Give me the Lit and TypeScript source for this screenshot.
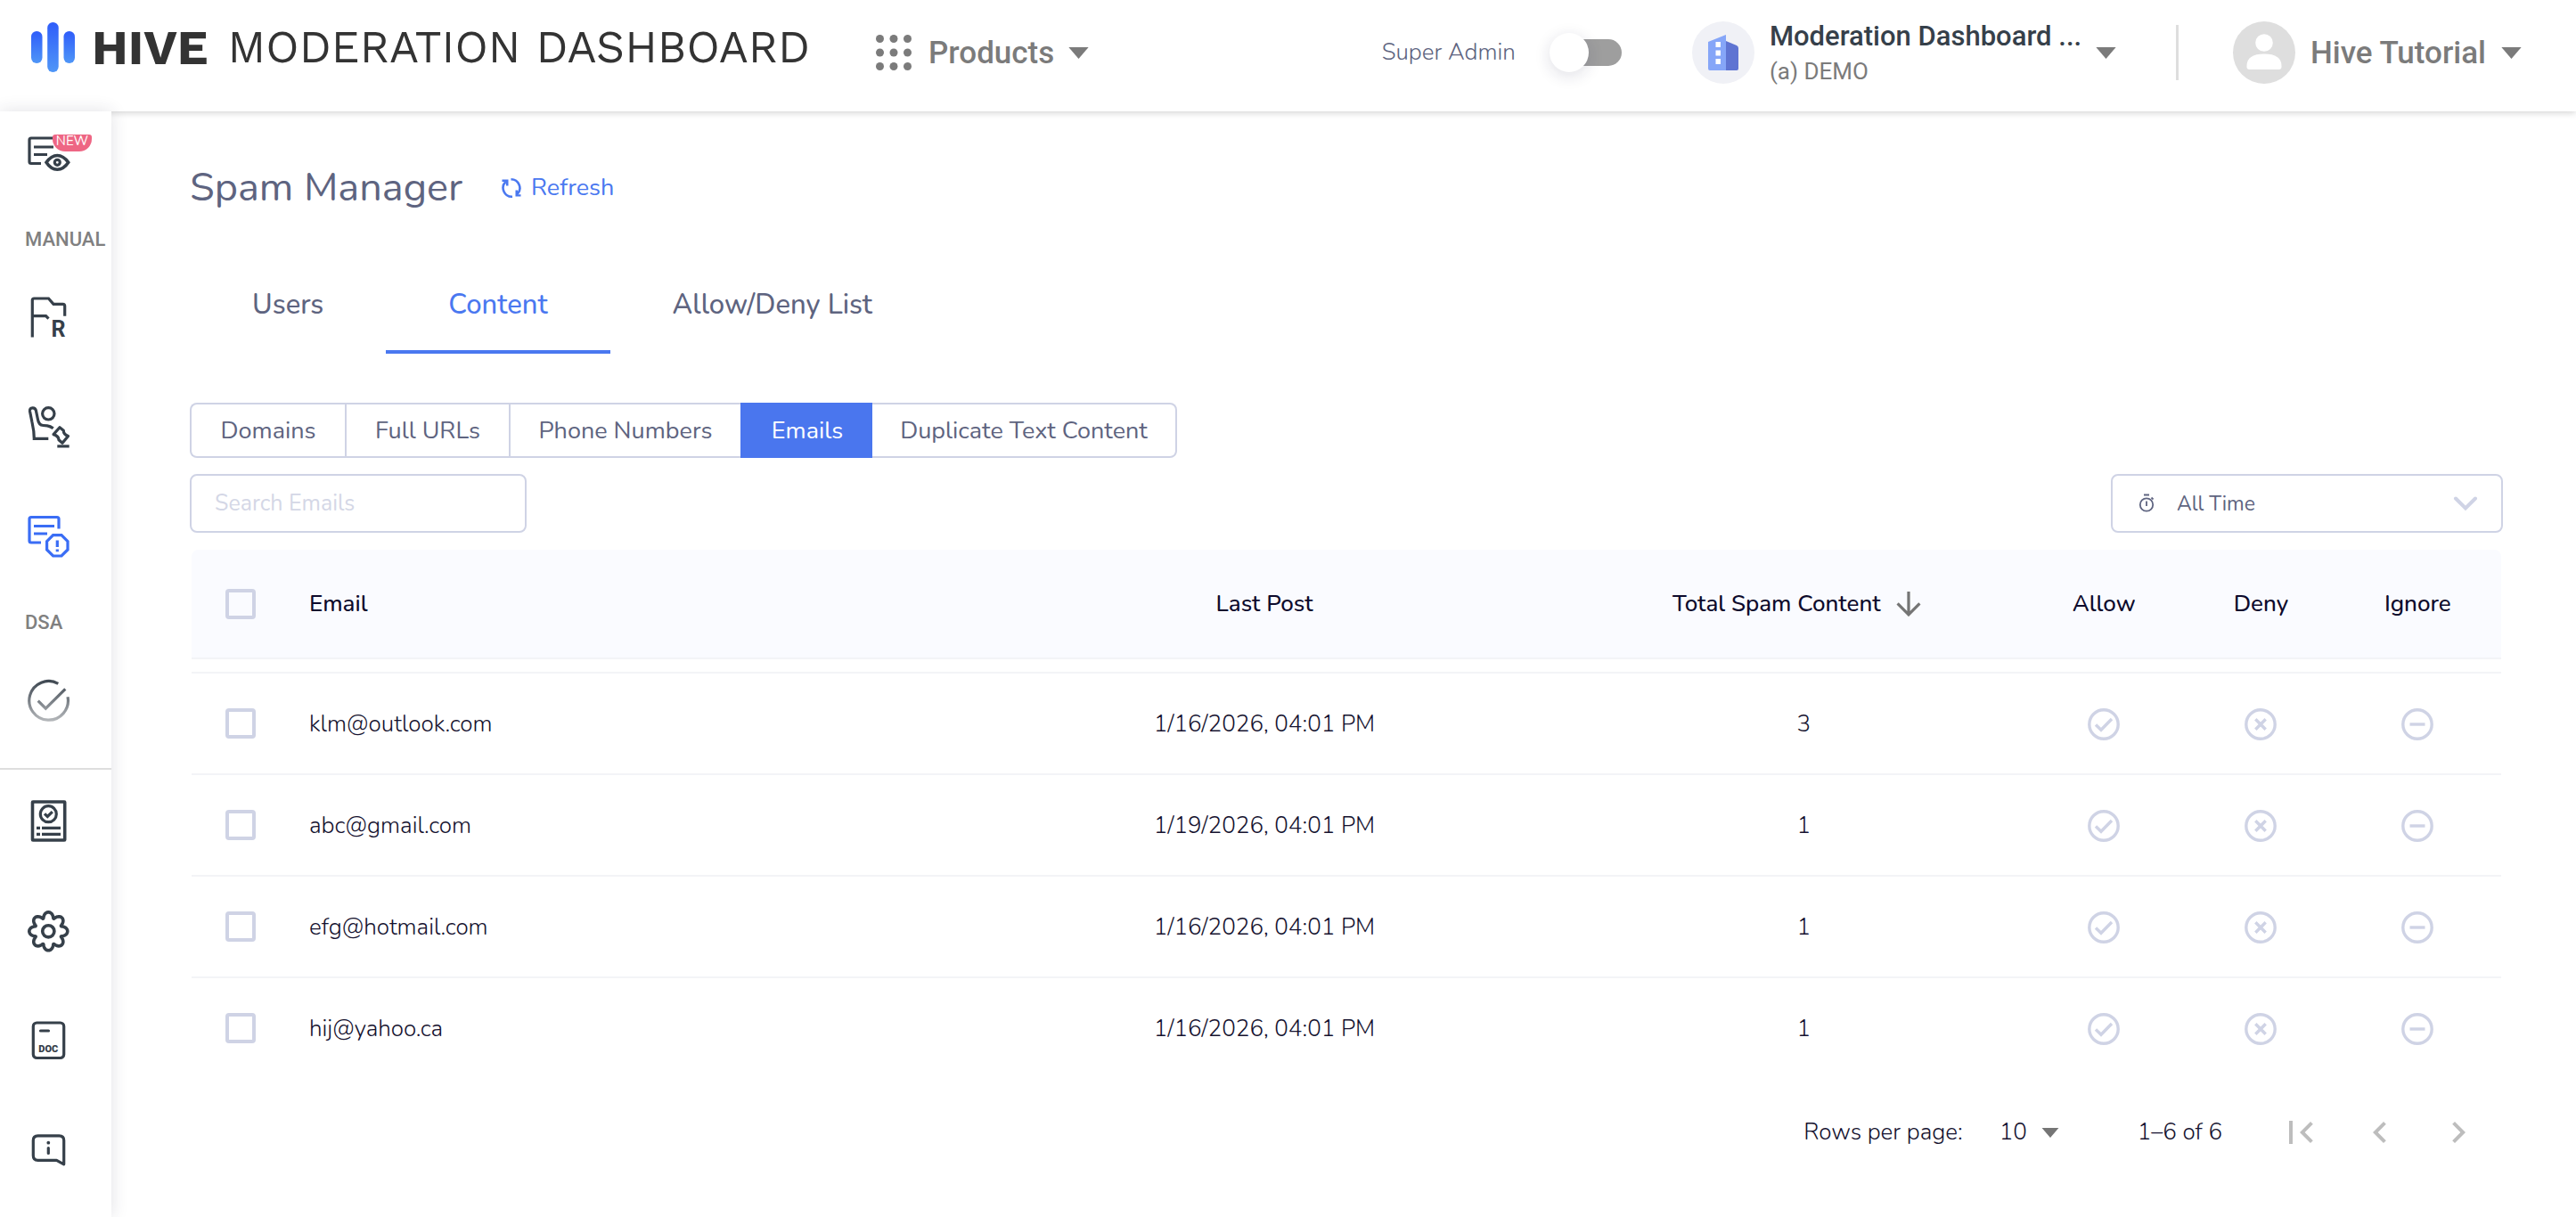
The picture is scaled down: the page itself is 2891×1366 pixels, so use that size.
import { LitElement, html, svg, css } from "lit";
import { customElement, state } from "lit/decorators.js";
import { classMap } from "lit/directives/class-map.js";

interface EmailRow {
  email: string;
  lastPost: string;
  total: number;
}

const ROWS: EmailRow[] = [
  { email: "klm@outlook.com", lastPost: "1/16/2026, 04:01 PM", total: 3 },
  { email: "abc@gmail.com", lastPost: "1/19/2026, 04:01 PM", total: 1 },
  { email: "efg@hotmail.com", lastPost: "1/16/2026, 04:01 PM", total: 1 },
  { email: "hij@yahoo.ca", lastPost: "1/16/2026, 04:01 PM", total: 1 },
];

const TABS = ["Users", "Content", "Allow/Deny List"];
const SEGMENTS = ["Domains", "Full URLs", "Phone Numbers", "Emails", "Duplicate Text Content"];

/* Eight-lobed gear outline, sampled around the circle. */
const gearPath = (): string => {
  const points: string[] = [];
  for (let i = 0; i < 160; i++) {
    const a = (i / 160) * Math.PI * 2;
    const r = 18.4 + 3.1 * Math.cos(8 * a);
    const t = a + 0.07 * Math.sin(8 * a);
    points.push(`${(24.3 + r * Math.cos(t)).toFixed(2)} ${(24.3 + r * Math.sin(t)).toFixed(2)}`);
  }
  return `M${points.join("L")}Z`;
};

const doc = svg`
  <path d="M16 31H5Q3 31 3 29V4.500Q3 2.500 5 2.500H34Q36 2.500 36 4.500V15.500"/>
  <path d="M8 12.500H31M8 21H23"/>`;

const ICONS = {
  review: svg`
    <g transform="translate(0 4.500)">${doc}</g>
    <path class="knock" d="M30 14H46V22H30Z"/>
    <path class="bold" d="M22 34.300Q27.500 26.500 34.300 26.500T46.700 34.300Q41.500 42.200 34.300 42.200T22 34.300Z"/>
    <circle cx="34.300" cy="34.300" r="3"/>`,
  flag: svg`
    <path d="M6.300 46.500V5Q6.300 3 8.300 3H24.500L30 9.300H40.500Q42.700 9.300 42.700 11.500V22.700M6.300 22.700H21.500L24.500 25.700"/>
    <text x="27.500" y="46.300" font-size="25" font-weight="700">R</text>`,
  hand: svg`
    <path d="M24.300 37.300H8.300Q8.300 29 6 19L3.500 6.500Q3.200 3 6.500 2.800Q9.500 2.600 10.300 5.500L12.300 15Q13.300 22.200 18.500 22.500L23 22.800Q26.500 23.300 29.700 25.800"/>
    <circle cx="24.300" cy="9.300" r="6.700"/>
    <path stroke-linejoin="round" d="M37 24.800L41.300 28.200Q41.200 32.500 46.500 34.400L40 42.300L36 38.700Q36 34.500 30 32.600Z"/>
    <path d="M34.300 45.900H47.700"/>`,
  spam: svg`
    ${doc}
    <path d="M29.600 22.600H39L46 29.600V39L39 46H29.600L22.600 39V29.600Z"/>
    <path d="M34.300 28.500V36M34.300 38.500V41.200"/>`,
  dsa: svg`
    <defs><linearGradient id="fade" gradientUnits="userSpaceOnUse" x1="0" y1="2" x2="0" y2="47">
      <stop offset="0" stop-color="#3f4852"/><stop offset="1" stop-color="#b4b7ba"/>
    </linearGradient></defs>
    <path stroke="url(#fade)" d="M35.300 5.400A21.800 21.800 0 1 0 46 20.200"/>
    <path stroke="url(#fade)" d="M12.700 24.700L21.300 33.200L43.300 11.300"/>`,
  policy: svg`
    <rect class="bold" x="6.500" y="2" width="36.200" height="43" rx="0.500"/>
    <circle cx="24.300" cy="15.700" r="9"/>
    <path d="M20 15.300L23.300 18.500L28.800 13.200"/>
    <path d="M11 31.300H15M17 31.300H38M11 38.300H15M17 38.300H38"/>`,
  gear: svg`
    <path class="bold" d="${gearPath()}" stroke-linejoin="round"/>
    <circle class="bold" cx="24.300" cy="24.300" r="6.600"/>`,
  docs: svg`
    <rect x="7.300" y="4" width="34.400" height="39.500" rx="4"/>
    <path stroke-linecap="round" d="M15.500 13H24.500"/>
    <text x="24.300" y="36.800" text-anchor="middle" font-size="11" font-weight="900">DOC</text>`,
  info: svg`
    <path stroke-linejoin="round" d="M12.500 7.800H36.500Q41.700 7.800 41.700 13V39.800L33.500 35.300H12.500Q7.300 35.300 7.300 30V13Q7.300 7.800 12.500 7.800Z"/>
    <circle class="fill" cx="24.300" cy="15.700" r="1.900"/>
    <path stroke-linecap="round" d="M24.300 21.500V27.500"/>`,
};

type IconName = keyof typeof ICONS;

const MANUAL: { icon: IconName; label: string; active?: boolean }[] = [
  { icon: "flag", label: "Review queue" },
  { icon: "hand", label: "Moderators" },
  { icon: "spam", label: "Spam Manager", active: true },
];

const SECONDARY: { icon: IconName; label: string }[] = [
  { icon: "policy", label: "Policies" },
  { icon: "gear", label: "Settings" },
  { icon: "docs", label: "Documentation" },
  { icon: "info", label: "Help" },
];

const caret = html`<svg class="caret" viewBox="0 0 24 14" aria-hidden="true"><path d="M0 0H24L12 14Z"/></svg>`;

@customElement("side-nav")
class SideNav extends LitElement {
  static styles = css`
    :host { display: block; background: #fff; box-shadow: 0 0 18px rgba(40, 40, 70, 0.14); position: relative; }
    nav { display: flex; flex-direction: column; font-family: Roboto, sans-serif; }
    .group { display: flex; flex-direction: column; gap: 75px; padding-left: 30px; }
    .first { padding-top: 23px; }
    .after-label { padding-top: 51px; }
    .last { padding-top: 34px; border-top: 2px solid #dedede; margin-top: 52px; }
    .link { display: block; position: relative; width: 48px; height: 48px; color: #36404a; }
    .link.active { color: #3a6df5; }
    .heading { margin: 61px 0 0 28px; font-size: 22px; line-height: 24px; font-weight: 500; color: #808080; }
    svg { display: block; width: 48px; height: 48px; overflow: visible; fill: none; stroke: currentColor; stroke-width: 3.2; }
    .bold { stroke-width: 3.6; }
    .knock { fill: #fff; stroke: none; }
    .fill { fill: currentColor; stroke: none; }
    text { fill: currentColor; stroke: none; }
    .badge {
      position: absolute; left: 29px; top: 3px; width: 44px; height: 19px; box-sizing: border-box;
      border-radius: 3px 3px 14px 14px; background: #ee6684; color: #fff; text-align: center;
      font: 400 15px/15px Nunito, "Open Sans", sans-serif;
    }
  `;

  private link(icon: IconName, label: string, active = false, badge = "") {
    return html`<a class=${classMap({ link: true, active })} href="#${icon}" aria-label=${label}>
      <svg viewBox="0 0 48 48" aria-hidden="true">${ICONS[icon]}</svg>
      ${badge ? html`<span class="badge">${badge}</span>` : ""}
    </a>`;
  }

  render() {
    return html`<nav aria-label="Main">
      <div class="group first">${this.link("review", "Review", false, "NEW")}</div>
      <div class="heading">MANUAL</div>
      <div class="group after-label">${MANUAL.map((i) => this.link(i.icon, i.label, !!i.active))}</div>
      <div class="heading">DSA</div>
      <div class="group after-label">${this.link("dsa", "DSA")}</div>
      <div class="group last">${SECONDARY.map((i) => this.link(i.icon, i.label))}</div>
    </nav>`;
  }
}

@customElement("top-bar")
class TopBar extends LitElement {
  static styles = css`
    :host { display: block; background: #fff; box-shadow: 0 1px 8px rgba(0, 0, 0, 0.2); font-family: Roboto, sans-serif; }
    header { display: flex; align-items: center; height: 118px; padding: 0 61px 7px 35px; }
    button { font: inherit; border: 0; padding: 0; background: none; display: flex; align-items: center; color: #7b7b7b; text-align: left; cursor: pointer; }
    .brand { display: flex; align-items: center; flex: none; width: 948px; padding-bottom: 12px; color: #333; text-decoration: none; white-space: nowrap; font-family: "Work Sans", Inter, sans-serif; }
    .mark { width: 49px; height: 56px; margin-right: 19px; flex: none; }
    .hive { font-size: 55px; line-height: 56px; font-weight: 700; margin-right: 22px; }
    .product { font-size: 50px; line-height: 56px; font-weight: 400; }
    .products { gap: 19px; font-size: 35px; font-weight: 500; }
    .apps { width: 40px; height: 40px; fill: #7b7b7b; }
    .caret { width: 23px; height: 13px; fill: #7b7b7b; flex: none; }
    .products .caret { margin-left: -3px; }
    .right { display: flex; align-items: center; margin-left: auto; white-space: nowrap; }
    .admin { display: flex; align-items: center; gap: 38px; font: 300 26px/36px Nunito, "Open Sans", sans-serif; color: #5e6480; margin-right: 79px; }
    .toggle { appearance: none; margin: 0; width: 81px; height: 44px; position: relative; }
    .toggle::before { content: ""; position: absolute; left: 14px; right: 0; top: 7px; height: 30px; border-radius: 15px; background: #9e9e9e; }
    .toggle::after { content: ""; position: absolute; left: 0; top: 0; width: 44px; height: 44px; border-radius: 50%; background: #fff; box-shadow: 0 4px 18px rgba(30, 30, 70, 0.14); }
    .avatar { width: 70px; height: 70px; flex: none; }
    .org { gap: 17px; }
    .org .text { display: block; width: 349px; padding-top: 2px; }
    .org .name { display: block; font-size: 31px; line-height: 40px; font-weight: 500; color: #36404a; }
    .org .sub { display: block; font-size: 26px; line-height: 38px; }
    .rule { width: 3px; height: 62px; background: #dedede; margin: 0 61px 0 67px; }
    .user { gap: 17px; font-size: 35px; font-weight: 500; }
  `;

  render() {
    return html`<header>
      <a class="brand" href="#home">
        <svg class="mark" viewBox="0 0 49 56" aria-hidden="true">
          <defs><linearGradient id="g" x1="0" y1="0" x2="0" y2="1"><stop offset="0" stop-color="#2f5dfa"/><stop offset="1" stop-color="#4f96f7"/></linearGradient></defs>
          <rect x="0" y="10" width="12.500" height="36" rx="6.200" fill="url(#g)"/>
          <rect x="18.200" y="0" width="12.500" height="56" rx="6.200" fill="url(#g)"/>
          <rect x="36.500" y="10" width="12.500" height="36" rx="6.200" fill="url(#g)"/>
        </svg>
        <span class="hive">HIVE</span><span class="product">MODERATION DASHBOARD</span>
      </a>
      <button class="products" type="button" aria-haspopup="menu">
        <svg class="apps" viewBox="0 0 40 40" aria-hidden="true">
          ${[4.5, 20, 35.5].map((y) => [4.5, 20, 35.5].map((x) => svg`<circle cx=${x} cy=${y} r="4.500"/>`))}
        </svg>
        <span>Products</span>${caret}
      </button>
      <div class="right">
        <label class="admin">Super Admin<input class="toggle" type="checkbox" role="switch" /></label>
        <button class="org" type="button" aria-haspopup="menu">
          <svg class="avatar" viewBox="0 0 70 70" aria-hidden="true">
            <circle cx="35" cy="35" r="35" fill="#f0f1f6"/>
            <path d="M18 23L38 15V55H20Q18 55 18 53Z" fill="#86a6f8"/>
            <path d="M38 22L50 27Q52 28 52 30V53Q52 55 50 55H38Z" fill="#5f74d2"/>
            <path d="M26.500 23H32V29H26.500ZM26.500 32.500H32V38.500H26.500ZM26.500 42H32V48H26.500Z" fill="#fff"/>
          </svg>
          <span class="text"><span class="name">Moderation Dashboard ...</span><span class="sub">(a) DEMO</span></span>
          ${caret}
        </button>
        <span class="rule"></span>
        <button class="user" type="button" aria-haspopup="menu">
          <svg class="avatar" viewBox="0 0 70 70" aria-hidden="true">
            <circle cx="35" cy="35" r="35" fill="#dedede"/>
            <circle cx="35" cy="24" r="9.800" fill="#fff"/>
            <path d="M15.500 50Q15.500 36.500 35 36.500T54.500 50V51Q54.500 54 51.500 54H18.500Q15.500 54 15.500 51Z" fill="#fff"/>
          </svg>
          <span>Hive Tutorial</span>${caret}
        </button>
      </div>
    </header>`;
  }
}

@customElement("spam-manager")
class SpamManager extends LitElement {
  @state() private tab = "Content";
  @state() private segment = "Emails";

  static styles = css`
    :host { display: block; font-family: Nunito, "Open Sans", sans-serif; color: #5e6480; }
    button, input, select { font: inherit; color: inherit; }
    button { border: 0; padding: 0; background: none; cursor: pointer; }
    main { padding: 56px 82px 0 88px; }
    .title { display: flex; align-items: center; gap: 43px; }
    h1 { margin: 0; font-size: 45px; line-height: 60px; font-weight: 400; }
    .refresh { display: flex; align-items: center; gap: 10px; font-size: 27px; line-height: 36px; color: #4a78f0; }
    .refresh svg { width: 24px; height: 24px; }
    .tabs { display: flex; margin-top: 44px; }
    .tab { height: 112px; padding: 6px 70px 0; font-size: 31px; font-weight: 500; border-bottom: 4px solid transparent; }
    .tab.on { color: #4a78f0; border-color: #4a78f0; }
    .segments { display: inline-grid; grid-template-columns: 174px 184px 260px 148px 342px; margin-top: 55px; height: 62px; }
    .segment { font-size: 27px; border: 2px solid #cfd3e5; border-width: 2px 0 2px 2px; white-space: nowrap; }
    .segment:first-child { border-radius: 8px 0 0 8px; }
    .segment:last-child { border-radius: 0 8px 8px 0; border-width: 2px 2px 2px 0; }
    .segment.on { background: #4a76ee; border-color: #4a76ee; color: #fff; }
    .filters { display: flex; justify-content: space-between; margin-top: 18px; }
    .search { box-sizing: border-box; width: 378px; height: 66px; border: 2px solid #cfd3e5; border-radius: 8px; padding: 0 26px; font-size: 25px; background: #fff; }
    .search::placeholder { color: #d4d7e6; opacity: 1; }
    .period { display: grid; align-items: center; width: 440px; }
    .period > * { grid-area: 1 / 1; }
    .period select { appearance: none; height: 66px; width: 100%; border: 2px solid #cfd3e5; border-radius: 8px; padding: 0 60px 0 72px; font-size: 23px; background: #fff; }
    .period svg { pointer-events: none; z-index: 1; }
    .watch { width: 20px; height: 24px; margin-left: 30px; }
    .down { width: 28px; height: 17px; margin-right: 28px; justify-self: end; }
    .table { margin: 19px 2px 0; }
    table { width: 100%; table-layout: fixed; border-collapse: separate; border-spacing: 0; color: #15122f; font-size: 26px; }
    .c-check { width: 132px; }
    .c-post { width: 27.5%; }
    .c-total { width: 19.2%; }
    .c-act { width: 6.8%; }
    .c-last { width: 7%; }
    th, td { padding: 0; text-align: center; border-bottom: 2px solid #f3f4f7; }
    th { height: 121px; font-weight: 500; background: #fafbff; color: #0d0a2c; }
    th:first-child { border-radius: 8px 0 0 0; }
    th:last-child { border-radius: 0 8px 0 0; }
    th:last-child, td:last-child { padding-right: 6px; }
    .email { text-align: left; }
    .gap td { height: 14px; }
    td { height: 112px; font-weight: 300; }
    tr:last-child td { border-color: transparent; }
    .pick { text-align: left; }
    .box { appearance: none; display: block; box-sizing: border-box; width: 34px; height: 34px; margin: 0 0 0 38px; border: 4px solid #cfd3e5; border-radius: 4px; }
    .sort { display: inline-flex; align-items: center; gap: 17px; }
    .sort svg { width: 28px; height: 28px; margin-right: 16px; }
    .act { display: inline-flex; vertical-align: middle; }
    .act svg { width: 36px; height: 36px; fill: none; stroke: #cfd3e5; stroke-width: 3.4; }
    .pager { display: flex; justify-content: flex-end; align-items: center; height: 118px; padding-right: 6px; font-size: 26px; line-height: 36px; font-weight: 300; color: #15122f; }
    .size { display: flex; align-items: center; gap: 41px; }
    .pick-size { display: grid; align-items: center; width: 68px; }
    .pick-size > * { grid-area: 1 / 1; }
    .pick-size select { appearance: none; border: 0; background: none; padding: 0; width: 100%; height: 36px; }
    .pick-size .caret { width: 22px; height: 11px; justify-self: end; fill: #757575; pointer-events: none; }
    .range { margin: 0 45px 0 87px; }
    .step { width: 88px; display: flex; justify-content: center; }
    .step svg { width: 48px; height: 48px; fill: #bdbdbd; }
  `;

  private act(label: string, shape: unknown) {
    return html`<td><button class="act" type="button" aria-label=${label}>
      <svg viewBox="0 0 36 36" aria-hidden="true"><circle cx="18" cy="18" r="16.200"/>${shape}</svg>
    </button></td>`;
  }

  private row(r: EmailRow) {
    return html`<tr>
      <td class="pick"><input class="box" type="checkbox" aria-label="Select ${r.email}" /></td>
      <td class="email">${r.email}</td>
      <td>${r.lastPost}</td>
      <td>${r.total}</td>
      ${this.act(`Allow ${r.email}`, svg`<path d="M9 18.500L15 24.300L27 12"/>`)}
      ${this.act(`Deny ${r.email}`, svg`<path d="M12.300 12.300L23.700 23.700M23.700 12.300L12.300 23.700"/>`)}
      ${this.act(`Ignore ${r.email}`, svg`<path d="M9.500 18H26.500"/>`)}
    </tr>`;
  }

  render() {
    return html`<main>
      <div class="title">
        <h1>Spam Manager</h1>
        <button class="refresh" type="button">
          <svg viewBox="0 0 24 24" fill="none" stroke="#4a78f0" stroke-width="2.600" aria-hidden="true">
            <path d="M11.500 2.300A9.800 9.800 0 0 1 18.500 19M13 21.700A9.800 9.800 0 0 1 5.500 5"/>
            <path fill="#4a78f0" stroke="none" d="M1.500 2.500H8.500V9.500H6V5H1.500ZM22.500 21.500H16.500V14.500H19V19.200H22.500Z"/>
          </svg>Refresh
        </button>
      </div>
      <div class="tabs" role="tablist">
        ${TABS.map((t) => html`<button type="button" role="tab" aria-selected=${t === this.tab}
          class=${classMap({ tab: true, on: t === this.tab })} @click=${() => (this.tab = t)}>${t}</button>`)}
      </div>
      <div class="segments">
        ${SEGMENTS.map((s) => html`<button type="button" aria-pressed=${s === this.segment}
          class=${classMap({ segment: true, on: s === this.segment })} @click=${() => (this.segment = s)}>${s}</button>`)}
      </div>
      <div class="filters">
        <input class="search" type="search" placeholder="Search Emails" aria-label="Search Emails" />
        <div class="period">
          <select aria-label="Time range"><option>All Time</option></select>
          <svg class="watch" viewBox="0 0 20 24" fill="none" stroke="#5e6480" stroke-width="1.800" aria-hidden="true">
            <circle cx="10" cy="13.500" r="7.200"/><path d="M10 9.500V15M7 2.500H13"/><path d="M15.500 5.500L17.500 7.500"/>
          </svg>
          <svg class="down" viewBox="0 0 28 17" fill="none" stroke="#cfd3e5" stroke-width="4" stroke-linecap="round" aria-hidden="true">
            <path d="M3 2.500L14 13.500L25 2.500"/>
          </svg>
        </div>
      </div>
      <div class="table">
        <table>
          <colgroup>
            <col class="c-check" /><col /><col class="c-post" /><col class="c-total" />
            <col class="c-act" /><col class="c-act" /><col class="c-last" />
          </colgroup>
          <thead>
            <tr>
              <th class="pick"><input class="box" type="checkbox" aria-label="Select all" /></th>
              <th class="email">Email</th>
              <th>Last Post</th>
              <th aria-sort="descending"><button class="sort" type="button">Total Spam Content
                <svg viewBox="0 0 26 26" fill="none" stroke="#757575" stroke-width="3" aria-hidden="true"><path d="M13 0V23.500M1.500 12.500L13 24L24.500 12.500"/></svg>
              </button></th>
              <th>Allow</th><th>Deny</th><th>Ignore</th>
            </tr>
          </thead>
          <tbody>
            <tr class="gap" aria-hidden="true"><td colspan="7"></td></tr>
            ${ROWS.map((r) => this.row(r))}
          </tbody>
        </table>
      </div>
      <div class="pager">
        <label class="size">Rows per page:
          <span class="pick-size"><select><option>10</option></select>${caret}</span>
        </label>
        <span class="range">1–6 of 6</span>
        <button class="step" type="button" aria-label="First page"><svg viewBox="0 0 24 24"><path d="M18.410 16.590L13.820 12l4.590-4.590L17 6l-6 6 6 6zM5 5.500h2v13H5z"/></svg></button>
        <button class="step" type="button" aria-label="Previous page"><svg viewBox="0 0 24 24"><path d="M15.410 7.410L14 6l-6 6 6 6 1.410-1.410L10.830 12z"/></svg></button>
        <button class="step" type="button" aria-label="Next page"><svg viewBox="0 0 24 24"><path d="M10 6L8.590 7.410 13.170 12l-4.580 4.590L10 18l6-6z"/></svg></button>
      </div>
    </main>`;
  }
}

@customElement("app-root")
class AppRoot extends LitElement {
  static styles = css`
    :host { display: block; }
    .page { display: grid; grid-template: auto 1fr / 125px minmax(0, 1fr); min-height: 100vh; background: #fff; }
    top-bar { grid-column: 1 / -1; }
  `;

  render() {
    return html`<div class="page"><top-bar></top-bar><side-nav></side-nav><spam-manager></spam-manager></div>`;
  }
}
